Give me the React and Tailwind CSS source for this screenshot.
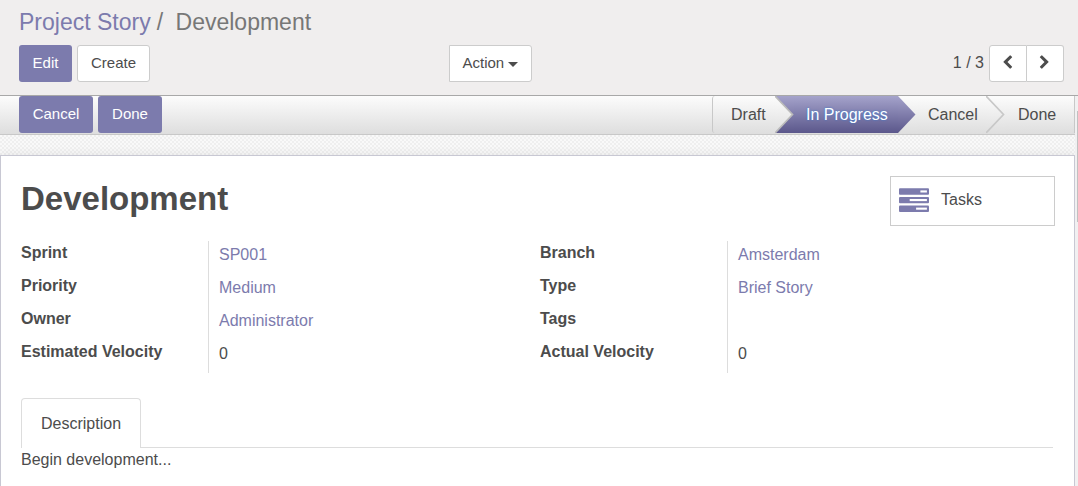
const primary =
  "h-[37px] rounded-[3px] bg-[#7c7bad] pb-[1px] text-[15px] text-white";

function Separator({ id, left, right, stroke }) {
  return (
    <svg width="19" height="37" viewBox="0 0 19 37" className="shrink-0">
      <defs>
        <linearGradient id={id + "l"} x1="0" y1="0" x2="0" y2="1">
          <stop offset="0" stopColor={left[0]} />
          <stop offset="1" stopColor={left[1]} />
        </linearGradient>
        <linearGradient id={id + "r"} x1="0" y1="0" x2="0" y2="1">
          <stop offset="0" stopColor={right[0]} />
          <stop offset="1" stopColor={right[1]} />
        </linearGradient>
      </defs>
      <rect width="19" height="37" fill={`url(#${id}r)`} />
      <path d="M0 0L17.5 18.5L0 37Z" fill={`url(#${id}l)`} />
      <path d="M0 0L17.5 18.5L0 37" fill="none" stroke={stroke} strokeWidth="1.7" />
    </svg>
  );
}

function ChevronLeft() {
  return (
    <svg width="15" height="15" viewBox="0 0 1792 1792" fill="currentColor">
      <path d="M1427 301l-531 531 531 531q19 19 19 45t-19 45l-166 166q-19 19-45 19t-45-19l-742-742q-19-19-19-45t19-45l742-742q19-19 45-19t45 19l166 166q19 19 19 45t-19 45z" />
    </svg>
  );
}

function ChevronRight() {
  return (
    <svg width="15" height="15" viewBox="0 0 1792 1792" fill="currentColor">
      <path d="M1363 877l-742 742q-19 19-45 19t-45-19l-166-166q-19-19-19-45t19-45l531-531-531-531q-19-19-19-45t19-45l166-166q19-19 45-19t45 19l742 742q19 19 19 45t-19 45z" />
    </svg>
  );
}

function TasksIcon() {
  return (
    <svg width="30" height="24" viewBox="0 0 30 24">
      <g fill="#7c7bad">
        <rect y="0.3" width="30" height="6.4" rx="1" />
        <rect y="8.9" width="30" height="6.4" rx="1" />
        <rect y="17.5" width="30" height="6.4" rx="1" />
      </g>
      <g fill="#fff">
        <rect x="21.4" y="2.4" width="6.5" height="2.1" />
        <rect x="10.7" y="11" width="17.2" height="2.1" />
        <rect x="17.1" y="19.6" width="10.8" height="2.1" />
      </g>
    </svg>
  );
}

const grey = ["#fcfcfc", "#dfdfdf"];
const purple = ["#a5a3cb", "#5b578b"];

function Group({ rows, className }) {
  return (
    <div className={"flex " + className}>
      <div className="w-[187px] font-bold">
        {rows.map(([label]) => (
          <div key={label} className="h-[33px] leading-[24px]">{label}</div>
        ))}
      </div>
      <div className="h-[132px] border-l border-[#ddd] pl-[10px]">
        {rows.map(([label, value, link]) => (
          <div key={label} className={"h-[33px] leading-[28px] " + (link ? "text-[#7c7bad]" : "")}>
            {value}
          </div>
        ))}
      </div>
    </div>
  );
}

export default function App() {
  return (
    <div className="flex h-[486px] w-[1078px] flex-col overflow-hidden bg-white font-['Liberation_Sans',sans-serif] text-[16px] text-[#4c4c4c]">
      <header className="h-[96px] shrink-0 border-b border-[#a8a8a8] bg-[#f0eeee]">
        <div className="h-[45px] pl-[19px] text-[23px] leading-[44px] whitespace-pre text-[#777]">
          <span className="text-[#7c7bad]">Project Story</span>
          <span className="pl-[6px]">/</span>
          <span className="pl-[12.5px]">Development</span>
        </div>
        <div className="flex h-[37px] pl-[19px] text-[15px]">
          <div className="flex w-[430px] gap-[5px]">
            <button className={primary + " w-[53px]"}>Edit</button>
            <button className="h-[37px] w-[73px] rounded-[3px] border border-[#ccc] bg-white pb-[1px]">Create</button>
          </div>
          <button className="flex h-[37px] w-[83px] items-center rounded-r-[3px] border border-[#ccc] bg-white pl-[12.5px]">
            Action
            <svg width="10" height="5" className="mt-[2px] ml-[4px]"><path d="M0 0H10L5 5Z" fill="#4c4c4c" /></svg>
          </button>
          <div className="ml-auto flex pr-[14px]">
            <span className="mr-[5px] text-[16px] leading-[35px]">1 / 3</span>
            <button className="flex h-[37px] w-[38px] items-center justify-center rounded-l-[3px] border border-[#ccc] bg-white pr-[1px] pb-[2px]"><ChevronLeft /></button>
            <button className="flex h-[37px] w-[37px] items-center justify-center rounded-r-[3px] border border-l-0 border-[#ccc] bg-white pr-[1px] pb-[2px]"><ChevronRight /></button>
          </div>
        </div>
      </header>
      <div className="flex grow">
        <main className="flex w-[1075px] flex-col">
          <div className="flex h-[39px] shrink-0 border-b border-[#c8c8c8] bg-linear-to-b from-[#fcfcfc] to-[#dedede] pl-[19px]">
            <button className={primary + " w-[74px]"}>Cancel</button>
            <button className={primary + " ml-[5px] w-[64px]"}>Done</button>
            <div className="ml-auto flex h-[37px] rounded-l-[3px] border-l border-[#c8c8c8] leading-[37px]">
              <span className="w-[62px] pl-[18px]">Draft</span>
              <Separator id="a" left={grey} right={purple} stroke="#bbb" />
              <span className="w-[104px] bg-linear-to-b from-[#a5a3cb] to-[#5b578b] pl-[12px] text-white [text-shadow:0_0_2px_#2b7bd8]">In Progress</span>
              <Separator id="b" left={purple} right={grey} stroke="transparent" />
              <span className="w-[69px] pl-[11px]">Cancel</span>
              <Separator id="c" left={grey} right={grey} stroke="#c8c8c8" />
              <span className="w-[70px] border-r border-[#c8c8c8] pl-[13px]">Done</span>
            </div>
          </div>
          <div className="h-[20px] shrink-0 bg-[#f9f9f9] bg-[conic-gradient(#efefef_25%,transparent_0_50%,#efefef_0_75%,transparent_0)] bg-size-[4px_4px]" />
          <section className="grow border border-b-0 border-[#c8c8d3] bg-white pl-[20px] shadow-[0_-2px_8px_rgba(0,0,0,0.06)]">
            <div className="flex h-[84px] justify-between pt-[20px] pr-[19px]">
              <h1 className="text-[33px] leading-[45px] font-bold">Development</h1>
              <button className="flex h-[50px] w-[165px] items-center border border-[#ccc] pb-[2px] pl-[8px]">
                <TasksIcon />
                <span className="ml-[12px]">Tasks</span>
              </button>
            </div>
            <div className="flex pt-[1px]">
              <Group className="w-[519px]" rows={[["Sprint", "SP001", 1], ["Priority", "Medium", 1], ["Owner", "Administrator", 1], ["Estimated Velocity", "0"]]} />
              <Group className="" rows={[["Branch", "Amsterdam", 1], ["Type", "Brief Story", 1], ["Tags", ""], ["Actual Velocity", "0"]]} />
            </div>
            <div className="mt-[25px] flex h-[50px] w-[1032px]">
              <div className="w-[120px] rounded-t-[4px] border border-b-0 border-[#ddd] pl-[19px] leading-[49px]">Description</div>
              <div className="grow border-b border-[#ddd]" />
            </div>
            <p className="leading-[24px]">Begin development...</p>
          </section>
        </main>
        <div className="flex w-[3px] justify-end bg-[#f1f0f1] pt-[15px]">
          <div className="h-[111px] w-px bg-[#c1c1c1]" />
        </div>
      </div>
    </div>
  );
}
